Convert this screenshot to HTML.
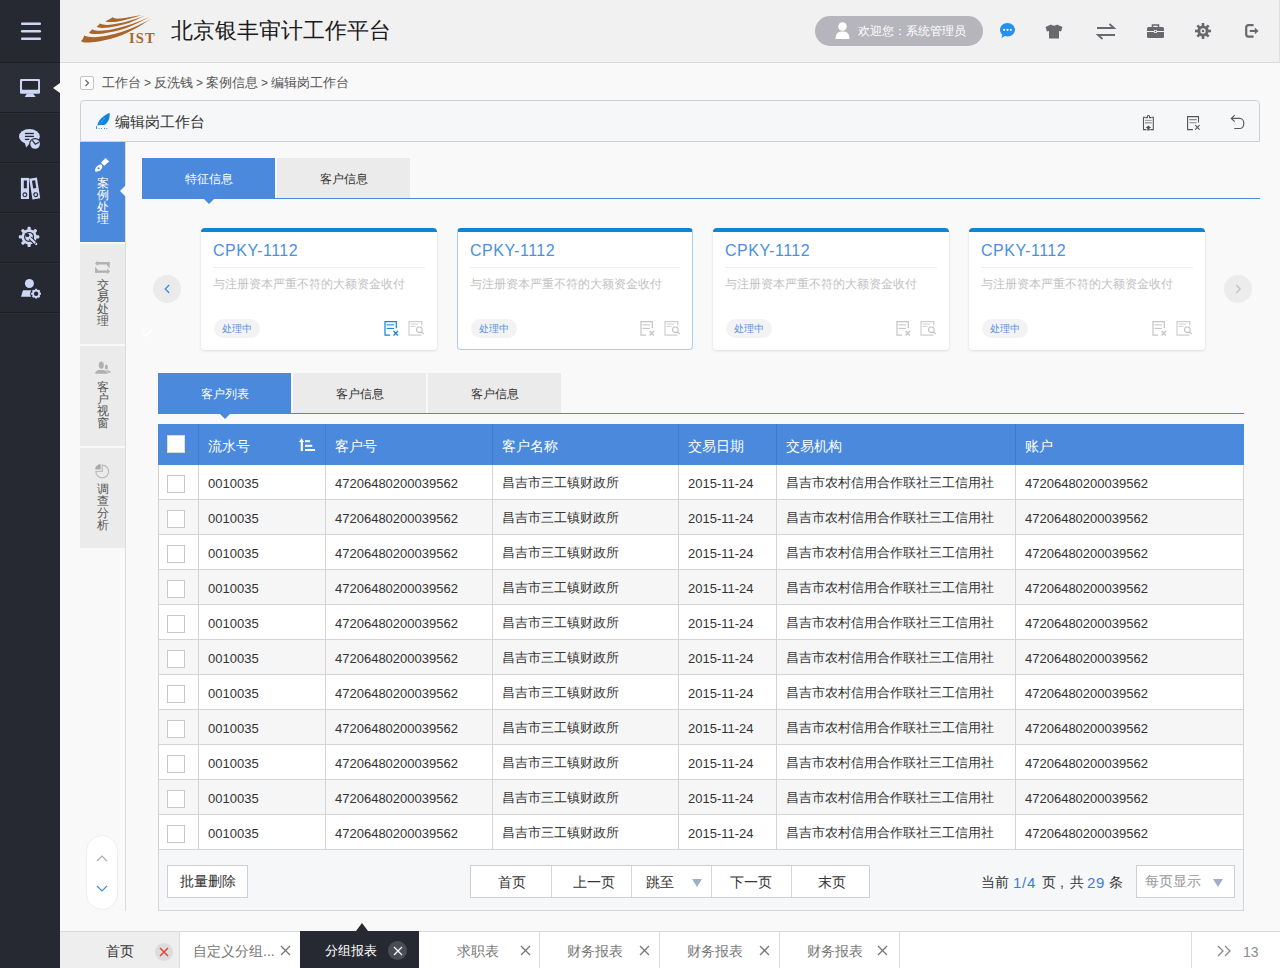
<!DOCTYPE html><html><head><meta charset="utf-8"><style>
*{box-sizing:border-box;margin:0;padding:0}
html,body{width:1280px;height:968px;overflow:hidden}
body{position:relative;background:#f9f9f9;font-family:"Liberation Sans",sans-serif;color:#333;font-size:13px}
.a{position:absolute}
.t{position:absolute;white-space:nowrap;line-height:1}
svg{position:absolute;overflow:visible}
#side{left:0;top:0;width:60px;height:968px;background:#262932}
.si{position:absolute;left:0;width:60px;border-bottom:1px solid #1c1e24}
#hdr{left:60px;top:0;width:1220px;height:63px;background:#f1f1f1;border-bottom:1px solid #dcdcdc;border-right:1px solid #e0e0e0}
.pill{left:815px;top:16px;width:168px;height:30px;border-radius:15px;background:#b5b5bb}
.ph{left:80px;top:100px;width:1180px;height:42px;border:1px solid #cdd1d7;border-bottom:1px solid #cdd1d7;border-radius:4px 4px 0 0;background:#f6f7f9}
.vt{position:absolute;left:80px;width:45px;height:100px;background:#ebebeb}
.vtx{position:absolute;left:0;width:45px;text-align:center;font-size:12px;line-height:12px;color:#555}
.tab{position:absolute;height:40px;background:#ebebeb;text-align:center;font-size:12px;line-height:43px;color:#333}
.tab.on{background:#4a89dc;color:#fff}
.card{position:absolute;top:228px;width:236px;height:122px;background:#fff;border-radius:4px;border-top:4px solid #0a86d6;box-shadow:0 1px 3px rgba(0,0,0,.12)}
.card .ct{position:absolute;left:12px;top:11px;font-size:16px;color:#4a90e2;line-height:1;letter-spacing:.5px}
.card .dv{position:absolute;left:12px;right:12px;top:35px;border-top:1px solid #f0f0f0}
.card .cd{position:absolute;left:12px;top:46px;font-size:12px;color:#c2c2c2;line-height:1;white-space:nowrap}
.card .st{position:absolute;left:13px;top:87px;width:46px;height:19px;border-radius:10px;background:#f3f3f3;color:#5596df;font-size:10px;line-height:19px;text-align:center}
table{position:absolute;left:158px;top:424px;border-collapse:collapse;table-layout:fixed}
td,th{border:1px solid #d4d4d4;height:35px;font-size:13px;color:#333;text-align:left;padding:2px 0 0 9px;white-space:nowrap;font-weight:normal;background:#fff}
th{background:#4a89dc;color:#fff;height:40px;font-size:14px;padding-top:4px;border-color:#4a89dc #3f7acb}
th:first-child{border-left-color:#4a89dc}th:last-child{border-right-color:#4a89dc}
tr:nth-child(odd) td{background:#f6f6f6}
.cb{display:inline-block;width:18px;height:18px;border:1px solid #c8c8c8;background:#fff;vertical-align:middle}
.ft{left:158px;top:850px;width:1086px;height:61px;border:1px solid #d4d6da;border-top:none;background:#f6f7f9}
.btn{position:absolute;border:1px solid #cfcfcf;background:#fff;font-size:14px;text-align:center;color:#333}
.bt{position:absolute;top:932px;height:37px;font-size:14px;line-height:38px;color:#777;white-space:nowrap}
</style></head><body>
<div id="side" class="a">
<div class="a" style="left:0;top:63px;width:60px;height:49px;background:#2b2e37"></div>
<div class="si" style="top:0px;height:63px"></div>
<div class="a" style="left:0;top:63px;width:60px;height:1px;background:#2c2f38"></div>
<div class="si" style="top:63px;height:50px"></div>
<div class="a" style="left:0;top:113px;width:60px;height:1px;background:#2c2f38"></div>
<div class="si" style="top:113px;height:50px"></div>
<div class="a" style="left:0;top:163px;width:60px;height:1px;background:#2c2f38"></div>
<div class="si" style="top:163px;height:50px"></div>
<div class="a" style="left:0;top:213px;width:60px;height:1px;background:#2c2f38"></div>
<div class="si" style="top:213px;height:50px"></div>
<div class="a" style="left:0;top:263px;width:60px;height:1px;background:#2c2f38"></div>
<div class="si" style="top:263px;height:50px"></div>
<div class="a" style="left:0;top:313px;width:60px;height:1px;background:#2c2f38"></div>
</div>
<svg style="left:20px;top:22px" width="22" height="18" viewBox="0 0 22 18"><g stroke="#cdd6f5" stroke-width="2.5" stroke-linecap="round"><line x1="2.2" y1="1.75" x2="19.8" y2="1.75"/><line x1="2.2" y1="9.25" x2="19.8" y2="9.25"/><line x1="2.2" y1="16.75" x2="19.8" y2="16.75"/></g></svg>
<svg style="left:20px;top:79px" width="21" height="19" viewBox="0 0 21 19"><rect x="0" y="0" width="20" height="14.7" rx="1.2" fill="#cdd6f5"/><rect x="2" y="2" width="16.1" height="8.8" rx=".8" fill="#262932"/><path d="M7.1,14.5 L13.1,14.5 L15.6,18 L4.6,18Z" fill="#cdd6f5"/></svg>
<div class="a" style="left:53px;top:82.5px;width:0;height:0;border-top:5.5px solid transparent;border-bottom:5.5px solid transparent;border-right:7px solid #f9f9f9"></div>
<svg style="left:19px;top:128px" width="23" height="22" viewBox="0 0 23 22"><ellipse cx="10.4" cy="8.5" rx="10.4" ry="7.5" fill="#cdd6f5"/><path d="M5.5,14 L7.2,19.6 L11,15Z" fill="#cdd6f5"/><g stroke="#262932" stroke-width="1.3"><line x1="5.9" y1="5.5" x2="14.9" y2="5.5"/><line x1="5.9" y1="8.4" x2="14.9" y2="8.4"/><line x1="5.9" y1="11.4" x2="10.3" y2="11.4"/></g><circle cx="16.1" cy="16" r="6" fill="#262932"/><circle cx="16.1" cy="16" r="4.8" fill="#cdd6f5"/><path d="M13.4,12.3 L16.3,16.2 L20,14.3" stroke="#262932" stroke-width="1.2" fill="none"/></svg>
<svg style="left:20px;top:177px" width="22" height="23" viewBox="0 0 22 23"><rect x=".9" y=".9" width="8.1" height="21.1" fill="#cdd6f5"/><rect x="3.8" y="3.5" width="3.1" height="7.8" fill="#262932"/><circle cx="4.9" cy="17.8" r="1.9" fill="none" stroke="#262932" stroke-width="1.1"/><g transform="rotate(-9 14.7 11.4)"><rect x="10.8" y=".9" width="7.8" height="21" fill="#cdd6f5"/><rect x="13.2" y="3.5" width="3.1" height="7.8" fill="#262932"/><circle cx="14.7" cy="17.8" r="1.9" fill="none" stroke="#262932" stroke-width="1.1"/></g></svg>
<svg style="left:19px;top:227px" width="22" height="22" viewBox="0 0 22 22"><rect x="8.5" y="-.3" width="3.2" height="5" rx="1" fill="#cdd6f5" transform="rotate(0 10.1 9.9)"/><rect x="8.5" y="-.3" width="3.2" height="5" rx="1" fill="#cdd6f5" transform="rotate(45 10.1 9.9)"/><rect x="8.5" y="-.3" width="3.2" height="5" rx="1" fill="#cdd6f5" transform="rotate(90 10.1 9.9)"/><rect x="8.5" y="-.3" width="3.2" height="5" rx="1" fill="#cdd6f5" transform="rotate(135 10.1 9.9)"/><rect x="8.5" y="-.3" width="3.2" height="5" rx="1" fill="#cdd6f5" transform="rotate(180 10.1 9.9)"/><rect x="8.5" y="-.3" width="3.2" height="5" rx="1" fill="#cdd6f5" transform="rotate(225 10.1 9.9)"/><rect x="8.5" y="-.3" width="3.2" height="5" rx="1" fill="#cdd6f5" transform="rotate(270 10.1 9.9)"/><rect x="8.5" y="-.3" width="3.2" height="5" rx="1" fill="#cdd6f5" transform="rotate(315 10.1 9.9)"/><circle cx="10.1" cy="9.9" r="7.6" fill="#cdd6f5"/><circle cx="10.1" cy="9.9" r="5" fill="#262932"/><circle cx="10.1" cy="9.9" r="3.8" fill="#cdd6f5"/><circle cx="8.4" cy="8.2" r="1.9" fill="#262932"/><path d="M12 12 L17.2 17" stroke="#262932" stroke-width="4.2" stroke-linecap="round"/><path d="M11 11 L17.2 17" stroke="#cdd6f5" stroke-width="2.4" stroke-linecap="round"/><circle cx="16.4" cy="16.2" r=".6" fill="#262932"/></svg>
<svg style="left:20px;top:278px" width="22" height="22" viewBox="0 0 22 22"><circle cx="9.4" cy="5.5" r="4.5" fill="#cdd6f5"/><path d="M3,12.3 L11.5,12.3 L11.5,18.8 L1,18.8Z" fill="#cdd6f5"/><circle cx="16.1" cy="15.7" r="5.9" fill="#262932"/><rect x="15" y="10.8" width="2.2" height="2.6" rx=".6" fill="#cdd6f5" transform="rotate(0 16.1 15.7)"/><rect x="15" y="10.8" width="2.2" height="2.6" rx=".6" fill="#cdd6f5" transform="rotate(45 16.1 15.7)"/><rect x="15" y="10.8" width="2.2" height="2.6" rx=".6" fill="#cdd6f5" transform="rotate(90 16.1 15.7)"/><rect x="15" y="10.8" width="2.2" height="2.6" rx=".6" fill="#cdd6f5" transform="rotate(135 16.1 15.7)"/><rect x="15" y="10.8" width="2.2" height="2.6" rx=".6" fill="#cdd6f5" transform="rotate(180 16.1 15.7)"/><rect x="15" y="10.8" width="2.2" height="2.6" rx=".6" fill="#cdd6f5" transform="rotate(225 16.1 15.7)"/><rect x="15" y="10.8" width="2.2" height="2.6" rx=".6" fill="#cdd6f5" transform="rotate(270 16.1 15.7)"/><rect x="15" y="10.8" width="2.2" height="2.6" rx=".6" fill="#cdd6f5" transform="rotate(315 16.1 15.7)"/><circle cx="16.1" cy="15.7" r="3.9" fill="#cdd6f5"/><circle cx="16.1" cy="15.7" r="2.2" fill="#262932"/></svg>
<div id="hdr" class="a"></div>
<svg style="left:80px;top:14px" width="80" height="32" viewBox="0 0 80 32"><g fill="#a8652c"><path d="M1,27 C3,29.5 14,29 30,25 C46,21 60,12 72,4.5 C58,12 44,18 30,21 C18,23.5 10,24 4,21.4 C4,23.5 2.5,25.5 1,27Z"/><path d="M9,18.5 C11,21 20,20.5 34,17.5 C48,14.5 60,8 69.5,3 C58,8 46,12.5 34,15 C24,17 17,17.5 12,15.2 C11.5,16.5 10,17.5 9,18.5Z"/><path d="M16.5,12.6 C18.5,14.8 26,14.3 38,11.8 C50,9.3 58,5 65,1.7 C56,5 46,8 38,9.6 C30,11.2 24,11.5 19.6,9.6 C19,11 18,12 16.5,12.6Z"/><path d="M25.6,7.2 C28,8.8 36,8.2 44,6.2 C52,4.2 57,2.5 62,1 C54,2.5 46,3.8 40,4.6 C36,5 34,4.5 32.5,3.3 C30,5 28,6.2 25.6,7.2Z"/></g><text x="49" y="28.8" font-family="Liberation Serif" font-weight="bold" font-size="14.5" fill="#a8652c" letter-spacing="1.2">IST</text></svg>
<div class="t" style="left:171px;top:20px;font-size:22px;color:#1a1a1a">北京银丰审计工作平台</div>
<div class="a pill"></div>
<svg style="left:835px;top:22px" width="15" height="17" viewBox="0 0 15 17"><circle cx="7.5" cy="4.5" r="4.3" fill="#fff"/><path d="M0.5 17 C0.5 11 3.5 9.5 7.5 9.5 C11.5 9.5 14.5 11 14.5 17Z" fill="#fff"/></svg>
<div class="t" style="left:858px;top:25px;font-size:12px;color:#fff">欢迎您：系统管理员</div>
<svg style="left:999px;top:22px" width="17" height="17" viewBox="0 0 17 17"><path d="M8.5 1C4.3 1 1 4 1 7.8c0 2 .9 3.7 2.3 4.9L2.5 16l3.4-1.9c.8.2 1.7.4 2.6.4 4.2 0 7.5-3 7.5-6.7S12.7 1 8.5 1z" fill="#2490f0"/><circle cx="5.2" cy="7.8" r="1.1" fill="#fff"/><circle cx="8.5" cy="7.8" r="1.1" fill="#fff"/><circle cx="11.8" cy="7.8" r="1.1" fill="#fff"/></svg>
<svg style="left:1045px;top:24px" width="18" height="15" viewBox="0 0 18 15"><path d="M6 0.5 C7 2 11 2 12 0.5 L17.5 3 L16 7.5 L14 7 L14 14.5 L4 14.5 L4 7 L2 7.5 L0.5 3Z" fill="#68686e"/></svg>
<svg style="left:1097px;top:23px" width="19" height="17" viewBox="0 0 19 17"><g stroke="#68686e" stroke-width="1.8" fill="none"><path d="M0 5 H17 L12.5 1"/><path d="M18 12 H1 L5.5 16"/></g></svg>
<svg style="left:1147px;top:24px" width="17" height="14" viewBox="0 0 17 14"><path d="M5.5 3 V1 H11.5 V3" fill="none" stroke="#68686e" stroke-width="1.5"/><rect x="0" y="3" width="17" height="11" rx="1.5" fill="#68686e"/><rect x="0" y="7" width="17" height="1" fill="#f1f1f1"/><rect x="7" y="6" width="3" height="3" rx=".5" fill="#f1f1f1"/><rect x="7.8" y="6.8" width="1.4" height="1.4" fill="#68686e"/></svg>
<svg style="left:1195px;top:23px" width="16" height="16" viewBox="0 0 16 16"><rect x="6.7" y="0" width="2.6" height="3.5" fill="#68686e" transform="rotate(0 8 8)"/><rect x="6.7" y="0" width="2.6" height="3.5" fill="#68686e" transform="rotate(45 8 8)"/><rect x="6.7" y="0" width="2.6" height="3.5" fill="#68686e" transform="rotate(90 8 8)"/><rect x="6.7" y="0" width="2.6" height="3.5" fill="#68686e" transform="rotate(135 8 8)"/><rect x="6.7" y="0" width="2.6" height="3.5" fill="#68686e" transform="rotate(180 8 8)"/><rect x="6.7" y="0" width="2.6" height="3.5" fill="#68686e" transform="rotate(225 8 8)"/><rect x="6.7" y="0" width="2.6" height="3.5" fill="#68686e" transform="rotate(270 8 8)"/><rect x="6.7" y="0" width="2.6" height="3.5" fill="#68686e" transform="rotate(315 8 8)"/><circle cx="8" cy="8" r="5.6" fill="#68686e"/><circle cx="8" cy="8" r="2.7" fill="#f1f1f1"/><circle cx="8" cy="8" r="1.3" fill="#68686e"/></svg>
<svg style="left:1244px;top:23px" width="17" height="16" viewBox="0 0 17 16"><path d="M9.6,2.2 H4.6 Q2.2,2.2 2.2,4.6 V11.3 Q2.2,13.7 4.6,13.7 H9.6" fill="none" stroke="#68686e" stroke-width="2.2"/><path d="M5.8,7.95 H12" stroke="#68686e" stroke-width="2.1"/><path d="M10.8,4.6 L14.6,7.95 L10.8,11.3Z" fill="#68686e"/></svg>
<div class="a" style="left:80px;top:76px;width:14px;height:14px;border:1px solid #c3c3c3;border-radius:2px;background:#fff"></div>
<svg style="left:84px;top:79px" width="6" height="8" viewBox="0 0 6 8"><path d="M1.5 1 L4.5 4 L1.5 7" fill="none" stroke="#666" stroke-width="1.2"/></svg>
<div class="t" style="left:102px;top:76px;font-size:13px;color:#555">工作台<span style="display:inline-block;margin:0 3.2px 0 2.9px;font-size:12px">&gt;</span>反洗钱<span style="display:inline-block;margin:0 3.2px 0 2.9px;font-size:12px">&gt;</span>案例信息<span style="display:inline-block;margin:0 3.2px 0 2.9px;font-size:12px">&gt;</span>编辑岗工作台</div>
<div class="a ph"></div>
<svg style="left:94px;top:110px" width="18" height="20" viewBox="0 0 18 20"><path d="M3.2,15.5 C4,12 6.5,8.5 9.4,6.6 C11,5.2 13.5,3.6 15.7,3.1 C15.8,5 15.5,7 15.3,8.2 C14.8,10 14,11 13.5,12 C12.5,13.5 11.5,14.5 10.8,14.65 C9,14.9 7.5,15 6.2,14.9 C5,15 4,15.3 3.2,15.5Z" fill="#0e84e0"/><path d="M10.5,8.2 L5.7,13.6" stroke="#9fd0f8" stroke-width=".8" stroke-dasharray="1 1"/><g fill="#3a96e6"><rect x="2" y="16" width="1" height="3"/><rect x="4.6" y="18" width="1" height="1"/><rect x="7" y="18" width="1" height="1"/><rect x="10" y="18" width="1" height="1"/><rect x="12.3" y="18" width="1" height="1"/></g></svg>
<div class="t" style="left:115px;top:114px;font-size:15px;color:#333">编辑岗工作台</div>
<svg style="left:1142px;top:115px" width="13" height="17" viewBox="0 0 13 17"><path d="M3.4,2.2 H1.5 V14.6 H4.5 M8.3,14.6 H11.3 V2.2 H9.4" fill="none" stroke="#555" stroke-width="1.1"/><path d="M3.4,2.6 H5.3 V1.6 A1.1,1.1 0 0 1 7.5,1.6 V2.6 H9.4" fill="none" stroke="#555" stroke-width="1.1"/><rect x="3" y="4.9" width="6.8" height="1" fill="#9a9a9a"/><rect x="3" y="7.1" width="6.8" height="1.4" fill="#9a9a9a"/><path d="M6.4,10.4 L9.3,13.1 H7.6 V15.6 H5.2 V13.1 H3.5Z" fill="#555"/></svg>
<svg style="left:1186px;top:115px" width="15" height="16" viewBox="0 0 15 16"><path d="M6.9,14.6 H1.6 V1.6 H12.5 V7.5" fill="none" stroke="#555" stroke-width="1.1"/><path d="M3.3,4.6 H10.7 M3.3,7.8 H10.7" stroke="#8a8a8a" stroke-width="1.1"/><path d="M9.2,10.2 L13.6,14.6 M13.6,10.2 L9.2,14.6" stroke="#555" stroke-width="1.1"/></svg>
<svg style="left:1230px;top:114px" width="16" height="16" viewBox="0 0 16 16"><path d="M4.7,1.1 L1.3,4.4 L4.7,7.6 M1.3,4.4 H9.7 A4.1,5.05 0 0 1 9.7,14.5 H4.2" fill="none" stroke="#5a5a5a" stroke-width="1.2"/></svg>
<div class="a" style="left:125px;top:142px;width:1px;height:769px;background:#dcdcdc"></div>
<div class="vt" style="top:142px;background:#4a89dc">
<div class="vtx" style="top:35px;color:#fff">案<br>例<br>处<br>理</div>
</div>
<div class="vt" style="top:244px;background:#ebebeb">
<div class="vtx" style="top:35px;color:#555">交<br>易<br>处<br>理</div>
</div>
<div class="vt" style="top:346px;background:#ebebeb">
<div class="vtx" style="top:35px;color:#555">客<br>户<br>视<br>窗</div>
</div>
<div class="vt" style="top:448px;background:#ebebeb">
<div class="vtx" style="top:35px;color:#555">调<br>查<br>分<br>析</div>
</div>
<div class="a" style="left:120px;top:185px;width:0;height:0;border-top:6px solid transparent;border-bottom:6px solid transparent;border-right:6px solid #f9f9f9"></div>
<svg style="left:94px;top:157px" width="16" height="16" viewBox="0 0 16 16"><path d="M11.5,.9 L15.2,4.4 L10.3,8.8 L6.9,5.7Z" fill="#fff"/><path d="M7.4,7.6 C9,9 8.6,11.6 6.3,13.3 C4.8,14.4 2.6,14.9 1.1,14.6 C.8,13.1 1.4,11 2.5,9.7 C4,8 6,7 7.4,7.6Z" fill="#fff"/><circle cx="4.5" cy="11.3" r="1.1" fill="#4a89dc"/></svg>
<svg style="left:94px;top:259px" width="18" height="17" viewBox="0 0 18 17"><g fill="#b0b0b0"><path d="M1,4.4 L3.9,1.6 L3.9,6.8Z"/><rect x="3.8" y="3.1" width="11.9" height="2.4"/><path d="M13.2,3.1 L15.7,3.1 L15.7,9.3 L13.2,6.5Z"/><path d="M16,12.4 L13.2,9.6 L13.2,15.2Z"/><rect x="1.1" y="11.5" width="12.2" height="2.3"/><path d="M1.1,7.8 L3.6,10.5 L3.6,13.8 L1.1,13.8Z"/></g></svg>
<svg style="left:94px;top:361px" width="18" height="14" viewBox="0 0 18 14"><g fill="#b0b0b0"><ellipse cx="7.3" cy="4.2" rx="2.5" ry="3.6"/><path d="M1.1,12.7 C1.1,10.5 3,9.2 6,9 L8.5,9 C11.5,9.2 13.8,10.5 13.8,12.7Z"/><ellipse cx="12.4" cy="6.1" rx="1.5" ry="2.5"/><path d="M12,9 C14.5,9.2 16.9,10.3 16.9,11.8 L14,11.8 C13.8,10.5 13,9.5 12,9Z"/></g></svg>
<svg style="left:94px;top:462px" width="17" height="17" viewBox="0 0 17 17"><path d="M8.25,3.15 A6.35,6.35 0 1 1 1.9,9.5 L8.25,9.5 Z" stroke="#bbb" stroke-width="1.2" fill="none"/><path d="M6.7,7.6 L6.7,2 A5.6,5.6 0 0 0 1.1,7.6 Z" fill="#aaa"/></svg>
<div class="tab on" style="left:142px;top:158px;width:133px">特征信息</div>
<div class="tab" style="left:277px;top:158px;width:133px">客户信息</div>
<div class="a" style="left:142px;top:198px;width:1118px;height:1px;background:#4a89dc"></div>
<div class="a" style="left:203px;top:198px;width:0;height:0;border-left:6px solid transparent;border-right:6px solid transparent;border-top:6px solid #4a89dc"></div>
<div class="a" style="left:153px;top:275px;width:28px;height:28px;border-radius:14px;background:#ebebeb"></div>
<svg style="left:163.5px;top:283.5px" width="7" height="11" viewBox="0 0 7 11"><path d="M5.2 1 L1.2 5 L5.2 9" fill="none" stroke="#2a8ae0" stroke-width="1.2"/></svg>
<div class="a" style="left:1224px;top:275px;width:28px;height:28px;border-radius:14px;background:#ececec"></div>
<svg style="left:1235px;top:283.5px" width="7" height="11" viewBox="0 0 7 11"><path d="M1.2 1 L5.2 5 L1.2 9" fill="none" stroke="#c0c0c0" stroke-width="1.2"/></svg>
<svg style="left:142px;top:328px" width="12" height="10" viewBox="0 0 12 10"><path d="M1 5 L4 8.5 L9.5 1.5" fill="none" stroke="#fff" stroke-width="1.6"/></svg>
<div class="card" style="left:201px;">
<div class="ct">CPKY-1112</div><div class="dv"></div><div class="cd">与注册资本严重不符的大额资金收付</div><div class="st">处理中</div>
</div>
<svg style="left:384px;top:321px" width="15" height="16" viewBox="0 0 15 16"><path d="M6,14.2 H1 V.7 H12.3 V7.3" fill="none" stroke="#0b86db" stroke-width="1.2"/><path d="M2.6,3.8 H10 " stroke="#0b86db" stroke-width="1.4" opacity=".75"/><path d="M2.6,7.4 H10" stroke="#0b86db" stroke-width="1.1"/><path d="M9.5,10 L14,14.5 M14,10 L9.5,14.5" stroke="#0b86db" stroke-width="1.3"/></svg>
<svg style="left:408px;top:321px" width="17" height="16" viewBox="0 0 17 16"><path d="M13.7,4.5 V.7 H1 V14.2 H13.7" fill="none" stroke="#cfcfcf" stroke-width="1.2"/><path d="M2.8,3.1 H9.8 M2.8,5.5 H7.5" stroke="#cfcfcf" stroke-width="1"/><circle cx="11.4" cy="8.8" r="2.8" fill="none" stroke="#c4c4c4" stroke-width="1.1"/><path d="M13.3,10.8 L15.6,13" stroke="#c4c4c4" stroke-width="1.2"/></svg>
<div class="card" style="left:457px;border-left:1px solid #a9cdf5;border-right:1px solid #a9cdf5;border-bottom:1px solid #a9cdf5;box-shadow:none">
<div class="ct">CPKY-1112</div><div class="dv"></div><div class="cd">与注册资本严重不符的大额资金收付</div><div class="st">处理中</div>
</div>
<svg style="left:640px;top:321px" width="15" height="16" viewBox="0 0 15 16"><path d="M6,14.2 H1 V.7 H12.3 V7.3" fill="none" stroke="#c4c4c4" stroke-width="1.2"/><path d="M2.6,3.8 H10 " stroke="#c4c4c4" stroke-width="1.4" opacity=".75"/><path d="M2.6,7.4 H10" stroke="#c4c4c4" stroke-width="1.1"/><path d="M9.5,10 L14,14.5 M14,10 L9.5,14.5" stroke="#c4c4c4" stroke-width="1.3"/></svg>
<svg style="left:664px;top:321px" width="17" height="16" viewBox="0 0 17 16"><path d="M13.7,4.5 V.7 H1 V14.2 H13.7" fill="none" stroke="#cfcfcf" stroke-width="1.2"/><path d="M2.8,3.1 H9.8 M2.8,5.5 H7.5" stroke="#cfcfcf" stroke-width="1"/><circle cx="11.4" cy="8.8" r="2.8" fill="none" stroke="#c4c4c4" stroke-width="1.1"/><path d="M13.3,10.8 L15.6,13" stroke="#c4c4c4" stroke-width="1.2"/></svg>
<div class="card" style="left:713px;">
<div class="ct">CPKY-1112</div><div class="dv"></div><div class="cd">与注册资本严重不符的大额资金收付</div><div class="st">处理中</div>
</div>
<svg style="left:896px;top:321px" width="15" height="16" viewBox="0 0 15 16"><path d="M6,14.2 H1 V.7 H12.3 V7.3" fill="none" stroke="#c4c4c4" stroke-width="1.2"/><path d="M2.6,3.8 H10 " stroke="#c4c4c4" stroke-width="1.4" opacity=".75"/><path d="M2.6,7.4 H10" stroke="#c4c4c4" stroke-width="1.1"/><path d="M9.5,10 L14,14.5 M14,10 L9.5,14.5" stroke="#c4c4c4" stroke-width="1.3"/></svg>
<svg style="left:920px;top:321px" width="17" height="16" viewBox="0 0 17 16"><path d="M13.7,4.5 V.7 H1 V14.2 H13.7" fill="none" stroke="#cfcfcf" stroke-width="1.2"/><path d="M2.8,3.1 H9.8 M2.8,5.5 H7.5" stroke="#cfcfcf" stroke-width="1"/><circle cx="11.4" cy="8.8" r="2.8" fill="none" stroke="#c4c4c4" stroke-width="1.1"/><path d="M13.3,10.8 L15.6,13" stroke="#c4c4c4" stroke-width="1.2"/></svg>
<div class="card" style="left:969px;">
<div class="ct">CPKY-1112</div><div class="dv"></div><div class="cd">与注册资本严重不符的大额资金收付</div><div class="st">处理中</div>
</div>
<svg style="left:1152px;top:321px" width="15" height="16" viewBox="0 0 15 16"><path d="M6,14.2 H1 V.7 H12.3 V7.3" fill="none" stroke="#c4c4c4" stroke-width="1.2"/><path d="M2.6,3.8 H10 " stroke="#c4c4c4" stroke-width="1.4" opacity=".75"/><path d="M2.6,7.4 H10" stroke="#c4c4c4" stroke-width="1.1"/><path d="M9.5,10 L14,14.5 M14,10 L9.5,14.5" stroke="#c4c4c4" stroke-width="1.3"/></svg>
<svg style="left:1176px;top:321px" width="17" height="16" viewBox="0 0 17 16"><path d="M13.7,4.5 V.7 H1 V14.2 H13.7" fill="none" stroke="#cfcfcf" stroke-width="1.2"/><path d="M2.8,3.1 H9.8 M2.8,5.5 H7.5" stroke="#cfcfcf" stroke-width="1"/><circle cx="11.4" cy="8.8" r="2.8" fill="none" stroke="#c4c4c4" stroke-width="1.1"/><path d="M13.3,10.8 L15.6,13" stroke="#c4c4c4" stroke-width="1.2"/></svg>
<div class="tab on" style="left:158px;top:373px;width:133px">客户列表</div>
<div class="tab" style="left:293px;top:373px;width:133px">客户信息</div>
<div class="tab" style="left:428px;top:373px;width:133px">客户信息</div>
<div class="a" style="left:158px;top:413px;width:1086px;height:1px;background:#4a89dc"></div>
<div class="a" style="left:219px;top:413px;width:0;height:0;border-left:6px solid transparent;border-right:6px solid transparent;border-top:6px solid #4a89dc"></div>
<table><colgroup><col style="width:40px"><col style="width:127px"><col style="width:167px"><col style="width:186px"><col style="width:98px"><col style="width:239px"><col style="width:228px"></colgroup><tr><th style="padding-left:8px"><span class="cb" style="border-color:#e6ddd0;position:relative;top:-3px"></span></th><th style="">流水号</th><th style="">客户号</th><th style="">客户名称</th><th style="">交易日期</th><th style="">交易机构</th><th style="">账户</th></tr><tr><td style="padding-left:8px"><span class="cb" style="position:relative;top:1px"></span></td><td style="">0010035</td><td style="">47206480200039562</td><td style="">昌吉市三工镇财政所</td><td style="">2015-11-24</td><td style="">昌吉市农村信用合作联社三工信用社</td><td style="">47206480200039562</td></tr><tr><td style="padding-left:8px"><span class="cb" style="position:relative;top:1px"></span></td><td style="">0010035</td><td style="">47206480200039562</td><td style="">昌吉市三工镇财政所</td><td style="">2015-11-24</td><td style="">昌吉市农村信用合作联社三工信用社</td><td style="">47206480200039562</td></tr><tr><td style="padding-left:8px"><span class="cb" style="position:relative;top:1px"></span></td><td style="">0010035</td><td style="">47206480200039562</td><td style="">昌吉市三工镇财政所</td><td style="">2015-11-24</td><td style="">昌吉市农村信用合作联社三工信用社</td><td style="">47206480200039562</td></tr><tr><td style="padding-left:8px"><span class="cb" style="position:relative;top:1px"></span></td><td style="">0010035</td><td style="">47206480200039562</td><td style="">昌吉市三工镇财政所</td><td style="">2015-11-24</td><td style="">昌吉市农村信用合作联社三工信用社</td><td style="">47206480200039562</td></tr><tr><td style="padding-left:8px"><span class="cb" style="position:relative;top:1px"></span></td><td style="">0010035</td><td style="">47206480200039562</td><td style="">昌吉市三工镇财政所</td><td style="">2015-11-24</td><td style="">昌吉市农村信用合作联社三工信用社</td><td style="">47206480200039562</td></tr><tr><td style="padding-left:8px"><span class="cb" style="position:relative;top:1px"></span></td><td style="">0010035</td><td style="">47206480200039562</td><td style="">昌吉市三工镇财政所</td><td style="">2015-11-24</td><td style="">昌吉市农村信用合作联社三工信用社</td><td style="">47206480200039562</td></tr><tr><td style="padding-left:8px"><span class="cb" style="position:relative;top:1px"></span></td><td style="">0010035</td><td style="">47206480200039562</td><td style="">昌吉市三工镇财政所</td><td style="">2015-11-24</td><td style="">昌吉市农村信用合作联社三工信用社</td><td style="">47206480200039562</td></tr><tr><td style="padding-left:8px"><span class="cb" style="position:relative;top:1px"></span></td><td style="">0010035</td><td style="">47206480200039562</td><td style="">昌吉市三工镇财政所</td><td style="">2015-11-24</td><td style="">昌吉市农村信用合作联社三工信用社</td><td style="">47206480200039562</td></tr><tr><td style="padding-left:8px"><span class="cb" style="position:relative;top:1px"></span></td><td style="">0010035</td><td style="">47206480200039562</td><td style="">昌吉市三工镇财政所</td><td style="">2015-11-24</td><td style="">昌吉市农村信用合作联社三工信用社</td><td style="">47206480200039562</td></tr><tr><td style="padding-left:8px"><span class="cb" style="position:relative;top:1px"></span></td><td style="">0010035</td><td style="">47206480200039562</td><td style="">昌吉市三工镇财政所</td><td style="">2015-11-24</td><td style="">昌吉市农村信用合作联社三工信用社</td><td style="">47206480200039562</td></tr><tr><td style="padding-left:8px"><span class="cb" style="position:relative;top:1px"></span></td><td style="">0010035</td><td style="">47206480200039562</td><td style="">昌吉市三工镇财政所</td><td style="">2015-11-24</td><td style="">昌吉市农村信用合作联社三工信用社</td><td style="">47206480200039562</td></tr></table>
<svg style="left:299px;top:437px" width="17" height="15" viewBox="0 0 17 15"><g fill="#fff"><rect x="1.7" y="4.5" width="2.2" height="9.6"/><path d="M0,4.9 L2.6,.9 L5,4.9Z"/><rect x="6" y="3.2" width="5.1" height="2"/><rect x="6" y="7.8" width="7.3" height="2"/><rect x="6" y="12" width="10.1" height="2"/></g></svg>
<div class="a ft"></div>
<div class="btn" style="left:167px;top:865px;width:81px;height:33px;line-height:31px">批量删除</div>
<div class="a" style="left:470px;top:865px;width:400px;height:33px;border:1px solid #cfcfcf;background:#fff"></div>
<div class="a" style="left:551px;top:866px;width:1px;height:31px;background:#d6d6d6"></div>
<div class="a" style="left:631px;top:866px;width:1px;height:31px;background:#d6d6d6"></div>
<div class="a" style="left:711px;top:866px;width:1px;height:31px;background:#d6d6d6"></div>
<div class="a" style="left:791px;top:866px;width:1px;height:31px;background:#d6d6d6"></div>
<div class="a" style="left:471px;top:866px;width:81px;height:33px;line-height:33px;text-align:center;font-size:14px;color:#333">首页</div>
<div class="a" style="left:553.5px;top:866px;width:80px;height:33px;line-height:33px;text-align:center;font-size:14px;color:#333">上一页</div>
<div class="t" style="left:646px;top:875px;font-size:14px;color:#333">跳至</div>
<div class="a" style="left:692px;top:879px;width:0;height:0;border-left:5px solid transparent;border-right:5px solid transparent;border-top:8px solid #9fb0c4"></div>
<div class="a" style="left:711px;top:866px;width:80px;height:33px;line-height:33px;text-align:center;font-size:14px;color:#333">下一页</div>
<div class="a" style="left:792.5px;top:866px;width:79px;height:33px;line-height:33px;text-align:center;font-size:14px;color:#333">末页</div>
<div class="t" style="left:981px;top:875px;font-size:14px;color:#333;">当前</div>
<div class="t" style="left:1013px;top:874.5px;font-size:15px;color:#3b7dd8;letter-spacing:.7px;">1/4</div>
<div class="t" style="left:1041.5px;top:875px;font-size:14px;color:#333;">页</div>
<div class="t" style="left:1060px;top:875px;font-size:14px;color:#333;">,</div>
<div class="t" style="left:1069.5px;top:875px;font-size:14px;color:#333;">共</div>
<div class="t" style="left:1087px;top:874.5px;font-size:15px;color:#3b7dd8;letter-spacing:.7px;">29</div>
<div class="t" style="left:1109px;top:875px;font-size:14px;color:#333;">条</div>
<div class="a" style="left:1136px;top:865px;width:99px;height:33px;border:1px solid #d0d0d0;background:#fff"></div>
<div class="t" style="left:1145px;top:874px;font-size:14px;color:#999">每页显示</div>
<div class="a" style="left:1213px;top:879px;width:0;height:0;border-left:5px solid transparent;border-right:5px solid transparent;border-top:8px solid #9fb0c4"></div>
<div class="a" style="left:86px;top:835px;width:32px;height:75px;border-radius:16px;background:#fff;border:1px solid #eee"></div>
<svg style="left:96px;top:855px" width="12" height="7" viewBox="0 0 12 7"><path d="M1 6 L6 1 L11 6" fill="none" stroke="#aaa" stroke-width="1.2"/></svg>
<svg style="left:96px;top:885px" width="12" height="7" viewBox="0 0 12 7"><path d="M1 1 L6 6 L11 1" fill="none" stroke="#3d8ee0" stroke-width="1.2"/></svg>
<div class="a" style="left:60px;top:931px;width:1220px;height:37px;background:#fff;border-top:1px solid #d9d9d9"></div>
<div class="a" style="left:60px;top:932px;width:120px;height:36px;background:#eeeeee"></div>
<div class="bt" style="left:106px;color:#333">首页</div>
<div class="a" style="left:155px;top:943px;width:18px;height:18px;border-radius:9px;background:#dcdcdc"></div>
<svg style="left:159px;top:947px" width="10" height="10" viewBox="0 0 10 10"><path d="M1 1 L9 9 M9 1 L1 9" stroke="#e8403a" stroke-width="1.5"/></svg>
<div class="a" style="left:179px;top:932px;width:1px;height:36px;background:#ddd"></div>
<div class="a" style="left:539px;top:932px;width:1px;height:36px;background:#ddd"></div>
<div class="a" style="left:659px;top:932px;width:1px;height:36px;background:#ddd"></div>
<div class="a" style="left:779px;top:932px;width:1px;height:36px;background:#ddd"></div>
<div class="a" style="left:899px;top:932px;width:1px;height:36px;background:#ddd"></div>
<div class="a" style="left:1191px;top:932px;width:1px;height:36px;background:#ddd"></div>
<div class="bt" style="left:193px">自定义分组...</div>
<svg style="left:280px;top:945px" width="11" height="11" viewBox="0 0 11 11"><path d="M1 1 L10 10 M10 1 L1 10" stroke="#777" stroke-width="1.3"/></svg>
<div class="a" style="left:300px;top:931px;width:119px;height:37px;background:#262932"></div>
<div class="a" style="left:356px;top:923px;width:0;height:0;border-left:6px solid transparent;border-right:6px solid transparent;border-bottom:8px solid #262932"></div>
<div class="bt" style="left:325px;color:#fff;font-size:13px">分组报表</div>
<div class="a" style="left:388px;top:941px;width:19px;height:19px;border-radius:10px;background:#4a4d55"></div>
<svg style="left:392.5px;top:945.5px" width="10" height="10" viewBox="0 0 10 10"><path d="M1 1 L9 9 M9 1 L1 9" stroke="#fff" stroke-width="1.2"/></svg>
<div class="bt" style="left:457px">求职表</div>
<svg style="left:520px;top:945px" width="11" height="11" viewBox="0 0 11 11"><path d="M1 1 L10 10 M10 1 L1 10" stroke="#777" stroke-width="1.3"/></svg>
<div class="bt" style="left:567px">财务报表</div>
<svg style="left:639px;top:945px" width="11" height="11" viewBox="0 0 11 11"><path d="M1 1 L10 10 M10 1 L1 10" stroke="#777" stroke-width="1.3"/></svg>
<div class="bt" style="left:687px">财务报表</div>
<svg style="left:759px;top:945px" width="11" height="11" viewBox="0 0 11 11"><path d="M1 1 L10 10 M10 1 L1 10" stroke="#777" stroke-width="1.3"/></svg>
<div class="bt" style="left:807px">财务报表</div>
<svg style="left:877px;top:945px" width="11" height="11" viewBox="0 0 11 11"><path d="M1 1 L10 10 M10 1 L1 10" stroke="#777" stroke-width="1.3"/></svg>
<svg style="left:1217px;top:945px" width="15" height="12" viewBox="0 0 15 12"><path d="M1 1 L6 6 L1 11 M8 1 L13 6 L8 11" fill="none" stroke="#888" stroke-width="1.3"/></svg>
<div class="bt" style="left:1243px;top:933px;color:#8a8a8a">13</div>
</body></html>
